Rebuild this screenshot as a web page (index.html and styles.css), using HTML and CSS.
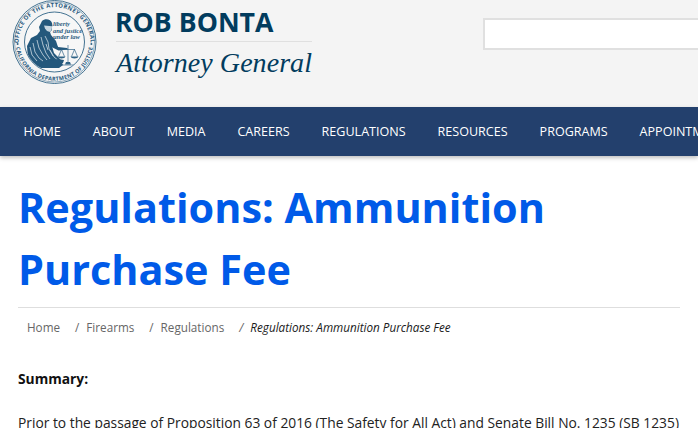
FILE: index.html
```html
<!DOCTYPE html>
<html lang="en">
<head>
<meta charset="utf-8">
<title>Regulations: Ammunition Purchase Fee</title>
<link rel="stylesheet" href="styles.css">
</head>
<body>
<header class="masthead">
  <a class="brand" href="#">
    <svg class="seal" viewBox="0 0 86 86" width="86" height="86" aria-hidden="true">
      <defs>
        <path id="arc-top" d="M7.600 52 A36 36 0 1 1 77.400 52"/>
        <path id="arc-bottom" d="M4 46 A38.700 38.700 0 0 0 81 46"/>
        <clipPath id="inner"><circle cx="42.500" cy="42" r="29.500"/></clipPath>
      </defs>
      <circle cx="42.500" cy="42" r="41.500" fill="none" stroke="#2f6386" stroke-width=".9"/>
      <circle cx="42.500" cy="42" r="40" fill="none" stroke="#2f6386" stroke-width=".5"/>
      <circle cx="42.500" cy="42" r="30" fill="#f7f7f7" stroke="#2f6386" stroke-width=".9"/>
      <text class="seal-ring"><textPath href="#arc-top" startOffset="50%" text-anchor="middle">OFFICE OF THE ATTORNEY GENERAL</textPath></text>
      <text class="seal-ring seal-ring-low"><textPath href="#arc-bottom" startOffset="50%" text-anchor="middle">CALIFORNIA DEPARTMENT OF JUSTICE</textPath></text>
      <circle cx="5.600" cy="44" r="1" fill="#2f6386"/>
      <circle cx="79.400" cy="44" r="1" fill="#2f6386"/>
      <g clip-path="url(#inner)">
        <path class="figure" d="M30 21c3-3 9-2 10 2l.5 3-1 1 .5 3-2 2 1 3 5 6 2 6-3 1-3-2 2 7 6 6 3 6-4 3H22l-6-8-1-14 4-8 6-3 3-4-1-4z"/>
        <path class="figure-light" d="M32 25.500l8 .8-.5 3.700-1.500 2-3-1-2-2.500z"/>
        <path class="streaks" d="M33 36l3 6 1 7 4 7M29 37l2 8 3 8 4 6M25 40l2 8 4 7 4 5M21 43l2 9 4 6 4 3M18 47l2 8 5 6M38 50l4 7 5 4M34 44l2 6"/>
        <path class="figure" d="M38 39l8 8 9 1 1.500 1.500-10 1-8-4z"/>
        <path class="figure" d="M33 62l13-3 6 1-1 3-8 3H34z"/>
        <path class="scale" d="M56 45v19M49 49.500h14M49.500 49.500l-3 7M49.500 49.500l3 7M62.500 49.500l-3 7M62.500 49.500l3 7M50 65h12"/>
        <path class="pan" d="M45.500 56.500h8c-.6 2.500-7.400 2.500-8 0zM58.500 56.500h8c-.6 2.500-7.400 2.500-8 0zM54 62h4l1 2.500h-6z"/>
      </g>
      <text class="seal-motto" x="41" y="26">liberty</text>
      <text class="seal-motto" x="41" y="32.500">and justice</text>
      <text class="seal-motto" x="41" y="39">under law</text>
    </svg>
    <span class="brand-text">
      <span class="brand-name">ROB BONTA</span>
      <span class="brand-title">Attorney General</span>
    </span>
  </a>
  <div class="search"></div>
</header>
<nav class="mainnav">
  <a href="#">HOME</a>
  <a href="#">ABOUT</a>
  <a href="#">MEDIA</a>
  <a href="#">CAREERS</a>
  <a href="#">REGULATIONS</a>
  <a href="#">RESOURCES</a>
  <a href="#">PROGRAMS</a>
  <a href="#">APPOINTMENTS</a>
</nav>
<main class="content">
  <h1 class="page-title">Regulations: Ammunition Purchase Fee</h1>
  <ol class="crumbs">
    <li><a href="#">Home</a></li>
    <li><a href="#">Firearms</a></li>
    <li><a href="#">Regulations</a></li>
    <li class="current">Regulations: Ammunition Purchase Fee</li>
  </ol>
  <p class="summary"><strong>Summary:</strong></p>
  <p class="body-text">Prior to the passage of Proposition 63 of 2016 (The Safety for All Act) and Senate Bill No. 1235 (SB 1235)</p>
</main>
</body>
</html>
```
FILE: styles.css
```css
* { box-sizing: border-box; }
html, body { height: 100%; }
body {
  margin: 0;
  overflow: hidden;
  background: #fff;
  color: #1a1a1a;
  font-family: "Open Sans", sans-serif;
}
a { color: inherit; text-decoration: none; }

.masthead {
  display: flex;
  align-items: flex-start;
  height: 107px;
  padding-left: 12px;
  background: #f4f4f4;
  overflow: hidden;
}
.brand { display: flex; align-items: flex-start; flex: none; }
.seal { flex: none; display: block; }
.seal-ring {
  font: 700 5.8px "Open Sans", sans-serif;
  fill: #2a5a7e;
  letter-spacing: .35px;
}
.seal-ring-low { font-size: 5.5px; letter-spacing: .25px; }
.seal-motto {
  font: italic 700 6.5px "Liberation Serif", serif;
  fill: #2a5a7e;
}
.figure { fill: #24587c; }
.figure-light { fill: #c7d6e0; }
.streaks { fill: none; stroke: #cfdce5; stroke-width: .8; }
.scale { fill: none; stroke: #2f6386; stroke-width: .7; }
.pan { fill: #2f6386; }

.brand-text {
  display: flex;
  flex-direction: column;
  width: 196px;
  margin-left: 18px;
  padding-top: 6px;
}
.brand-name {
  padding-bottom: 3px;
  border-bottom: 1px solid #e0e0e0;
  color: #023c5e;
  font-size: 26.7px;
  font-weight: 700;
  line-height: 32px;
  text-indent: -1px;
  white-space: nowrap;
}
.brand-title {
  padding-top: 3px;
  color: #023c5e;
  font-family: "Liberation Serif", serif;
  font-size: 28px;
  font-style: italic;
  line-height: 36px;
  letter-spacing: .05px;
  white-space: nowrap;
}
.search {
  flex: none;
  width: 300px;
  height: 32px;
  margin: 18px 0 0 171px;
  background: #fff;
  border: 1px solid #e0e0e0;
  border-width: 2px 0 2px 2px;
}

.mainnav {
  display: flex;
  align-items: center;
  gap: 32px;
  height: 49px;
  padding-left: 23.5px;
  background: #23406d;
  color: #fff;
  font-size: 12.55px;
  white-space: nowrap;
  overflow: hidden;
  box-shadow: 0 2px 4px rgba(0, 0, 0, .25);
}

.content { padding: 20px 18px 0; }
.page-title {
  margin: 0;
  padding: 0 0 7px;
  width: 662px;
  border-bottom: 1px solid #dedede;
  color: #005ae8;
  font-size: 41.4px;
  font-weight: 700;
  line-height: 62px;
}
.crumbs {
  display: flex;
  align-items: center;
  margin: 0;
  padding: 11px 0 0 9px;
  list-style: none;
  color: #666;
  font-size: 11.7px;
  line-height: 17px;
}
.crumbs li + li { margin-left: 15px; }
.crumbs li + li::before { content: "/"; margin-right: 7px; color: #666; }
.current { color: #1a1a1a; font-style: italic; }
.summary {
  margin: 33px 0 0;
  color: #111;
  font-size: 13.8px;
  line-height: 20px;
}
.body-text {
  margin: 24px 0 0;
  width: 680px;
  color: #222;
  font-size: 13.8px;
  line-height: 20px;
  white-space: nowrap;
}
```
